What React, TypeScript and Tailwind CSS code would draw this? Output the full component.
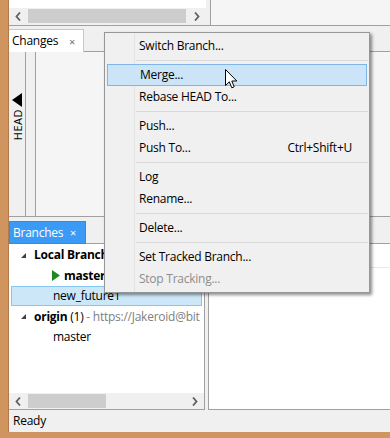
import React from "react";

const ChevLeft = () => (
  <svg width="6" height="9" viewBox="0 0 6 9">
    <polyline points="5,0.5 1.5,4.5 5,8.5" fill="none" stroke="#606060" strokeWidth="1.8" />
  </svg>
);
const ChevRight = () => (
  <svg width="6" height="9" viewBox="0 0 6 9">
    <polyline points="1,0.5 4.5,4.5 1,8.5" fill="none" stroke="#606060" strokeWidth="1.8" />
  </svg>
);

const Scrollbar = ({ thumbLeft, thumbWidth }: { thumbLeft: number; thumbWidth: number }) => (
  <div className="relative h-[16px] bg-[#f0f0f0] flex items-center justify-between px-[6px]">
    <ChevLeft />
    <div
      className="absolute top-[1px] h-[14px] bg-[#cdcdcd]"
      style={{ left: thumbLeft, width: thumbWidth }}
    />
    <ChevRight />
  </div>
);

const Expander = () => (
  <svg width="7" height="7" viewBox="0 0 7 7" className="shrink-0">
    <polygon points="6,1 6,6 1,6" fill="#404040" />
  </svg>
);

const MenuItem = ({
  label,
  shortcut,
  active,
  disabled,
}: {
  label: string;
  shortcut?: string;
  active?: boolean;
  disabled?: boolean;
}) => (
  <div
    className={
      "relative z-10 h-[22px] flex items-center justify-between pr-[17px] " +
      (active
        ? "mx-[2px] pl-[32px] bg-[#cce4f7] border border-[#7fb5e8]"
        : "pl-[34px]") +
      (disabled ? " text-[#8d8d8d]" : " text-[#000]")
    }
  >
    <span>{label}</span>
    {shortcut && <span>{shortcut}</span>}
  </div>
);

const Sep = () => (
  <div className="h-[7px] flex items-center pl-[31px] pr-[1px]">
    <div className="w-full h-[1px] bg-[#d9d9d9]" />
  </div>
);

export default function App() {
  return (
    <div
      className="relative w-[390px] h-[438px] overflow-hidden bg-[#d0945f] text-[12px] leading-none text-black tracking-[-0.25px]"
      style={{ fontFamily: "'Open Sans', 'Noto Sans', sans-serif" }}
    >
      <div className="flex h-full pl-[8px] pb-[6px]">
        <div className="flex-1 flex flex-col bg-[#f0f0f0] border-l border-[#b07a4c]">
          {/* top row */}
          <div className="h-[26px] flex border-b border-[#a0a0a0]">
            <div className="w-[197px] flex flex-col">
              <div className="h-[8px] bg-white" />
              <Scrollbar thumbLeft={19} thumbWidth={158} />
            </div>
            <div className="w-[4px]" />
            <div className="flex-1 border-l border-[#a0a0a0] bg-[#f5f5f5]" />
          </div>
          {/* Changes tab strip */}
          <div className="mt-[3px] h-[23px] flex">
            <div className="w-[75px] bg-white border-t border-r border-[#c8c8c8] flex items-center justify-between pl-[3px] pr-[8px]">
              <span>Changes</span>
              <span className="text-[11px] text-[#707070]">×</span>
            </div>
            <div className="flex-1 border-b border-[#a0a0a0]" />
          </div>
          {/* Changes pane */}
          <div className="h-[165px] flex border-b border-[#a0a0a0]">
            <div className="w-[17px] border-r border-[#a0a0a0] flex flex-col items-center pt-[41px]">
              <svg width="11" height="14" viewBox="0 0 11 14">
                <polygon points="10,0 10,14 0,7" fill="#000" />
              </svg>
              <div
                className="mt-[2px] text-[11px] tracking-[0.5px]"
                style={{ writingMode: "vertical-rl", transform: "rotate(180deg)" }}
              >
                HEAD
              </div>
            </div>
            <div className="w-[10px] border-r border-[#a0a0a0]" />
            <div className="flex-1 bg-[#f5f5f5]" />
          </div>
          {/* Branches tab strip */}
          <div className="mt-[4px] h-[23px] flex">
            <div className="w-[77px] bg-[#3a9af5] border border-[#3a8ad8] text-white flex items-center justify-between pl-[3px] pr-[9px]">
              <span>Branches</span>
              <span className="text-[11px]">×</span>
            </div>
            <div className="flex-1 border-b border-[#a0a0a0]" />
          </div>
          {/* bottom panes */}
          <div className="flex-1 flex">
            <div className="w-[196px] bg-white border-r border-b border-[#a0a0a0] flex flex-col">
              <div className="flex-1 flex flex-col pt-[1px]">
                <div className="h-[20px] flex items-center pl-[11px] gap-[7px]">
                  <Expander />
                  <span className="font-bold">Local Branches</span>
                </div>
                <div className="h-[21px] flex items-center pl-[43px] gap-[4px]">
                  <svg width="8" height="11" viewBox="0 0 8 11">
                    <polygon points="0,0 8,5.5 0,11" fill="#1e8a1e" />
                  </svg>
                  <span className="font-bold">master</span>
                </div>
                <div className="h-[20px] mx-[2px] flex items-center pl-[41px] bg-[#cce8f8] border border-[#86c6f2]">
                  <span>new_future1</span>
                </div>
                <div className="h-[21px] flex items-center pl-[11px] gap-[7px] whitespace-nowrap">
                  <Expander />
                  <span>
                    <span className="font-bold">origin</span> (1){" "}
                    <span className="text-[#808080]">- https://Jakeroid@bit</span>
                  </span>
                </div>
                <div className="h-[19px] flex items-center pl-[44px]">
                  <span>master</span>
                </div>
              </div>
              <Scrollbar thumbLeft={19} thumbWidth={78} />
            </div>
            <div className="w-[3px]" />
            <div className="flex-1 bg-white border-l border-b border-[#a0a0a0] flex flex-col">
              <div className="h-[24px] border-b border-[#e3ecf5]" />
            </div>
          </div>
          {/* status bar */}
          <div className="h-[22px] flex items-center pl-[4px]">Ready</div>
        </div>
      </div>

      {/* Context menu */}
      <div className="absolute left-[104px] top-[32px] w-[266px] h-[261px] bg-[#f0f0f0] border border-[#979797] py-[2px] shadow-[2px_2px_3px_rgba(0,0,0,0.45)]">
        <div className="absolute left-[29px] top-0 bottom-0 w-[1px] bg-[#e2e2e2]" />
        <MenuItem label="Switch Branch..." />
        <Sep />
        <MenuItem label="Merge..." active />
        <MenuItem label="Rebase HEAD To..." />
        <Sep />
        <MenuItem label="Push..." />
        <MenuItem label="Push To..." shortcut="Ctrl+Shift+U" />
        <Sep />
        <MenuItem label="Log" />
        <MenuItem label="Rename..." />
        <Sep />
        <MenuItem label="Delete..." />
        <Sep />
        <MenuItem label="Set Tracked Branch..." />
        <MenuItem label="Stop Tracking..." disabled />
      </div>

      {/* cursor */}
      <svg
        className="absolute left-[225px] top-[69px] z-20"
        width="13"
        height="21"
        viewBox="0 0 13 21"
      >
        <path
          d="M0.5 0.5 L0.5 16.5 L4.3 12.8 L6.8 18.8 L9.2 17.8 L6.8 12 L11.8 12 Z"
          fill="#fff"
          stroke="#000"
          strokeWidth="1"
          strokeLinejoin="miter"
        />
      </svg>
    </div>
  );
}
